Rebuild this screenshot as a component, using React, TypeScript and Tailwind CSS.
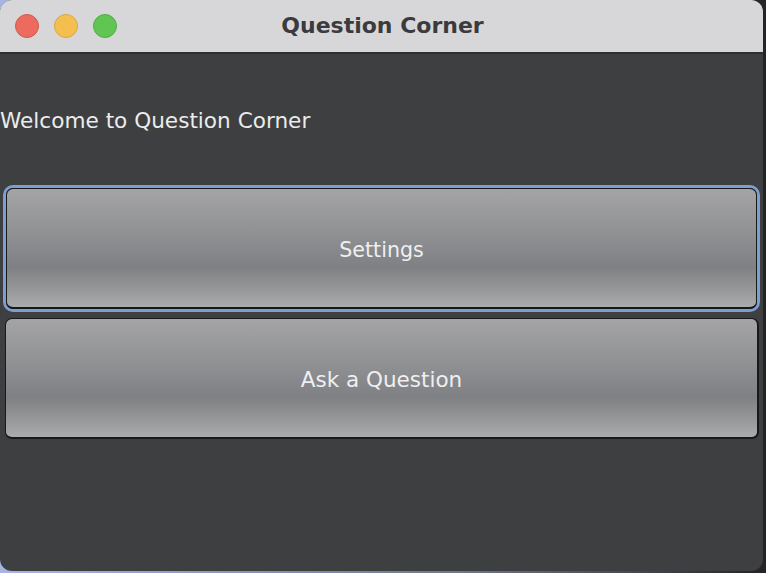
export default function App() {
  const font = { fontFamily: '"DejaVu Sans", "Liberation Sans", sans-serif' };

  return (
    <div
      className="w-[766px] h-[573px] overflow-hidden bg-[linear-gradient(90deg,#a8b4e4_0%,#6f7590_60%,#242426_100%)]"
      style={font}
    >
      <div className="w-[763px] h-[571px] rounded-[12px] overflow-hidden flex flex-col bg-[#3e3f41]">
        {/* title bar */}
        <div className="relative h-[54px] shrink-0 bg-[#d7d7d9] border-b-2 border-[#2e2e30] flex items-center">
          <div className="flex items-center gap-[15px] pl-[15px]">
            <span className="w-[24px] h-[24px] rounded-full bg-[#ec6a5e] border border-[#d25a4f]" />
            <span className="w-[24px] h-[24px] rounded-full bg-[#f4bf4f] border border-[#d9a840]" />
            <span className="w-[24px] h-[24px] rounded-full bg-[#61c554] border border-[#4fae43]" />
          </div>
          <div className="absolute inset-0 flex items-center justify-center pl-[2px] pb-[2px] text-[22px] font-bold text-[#3b3b3d]">
            Question Corner
          </div>
        </div>

        {/* content */}
        <div className="flex flex-col">
          <div className="h-[131px] pt-[52px] text-[21.6px] text-[#ececec] leading-[30px]">
            Welcome to Question Corner
          </div>

          <div className="px-[3px]">
            <div className="rounded-[10px] border-[3px] border-[#7d9fd0]">
              <button className="w-full h-[121px] rounded-[7px] border border-b-2 border-[#19191b] bg-[linear-gradient(180deg,#a4a4a6_0%,#8f9092_40%,#7f8083_66%,#9a9b9d_88%,#abacae_100%)] text-[20.6px] text-[#efefef] pt-[5px]">
                Settings
              </button>
            </div>
          </div>

          <div className="px-[5px] pt-[6px] pr-[4px]">
            <button className="w-full h-[121px] rounded-[7px] border border-[#19191b] border-b-2 border-r-2 bg-[linear-gradient(180deg,#a4a4a6_0%,#8f9092_40%,#7f8083_66%,#9a9b9d_88%,#abacae_100%)] text-[21.5px] text-[#efefef] pt-[5px]">
              Ask a Question
            </button>
          </div>
        </div>
      </div>
    </div>
  );
}
